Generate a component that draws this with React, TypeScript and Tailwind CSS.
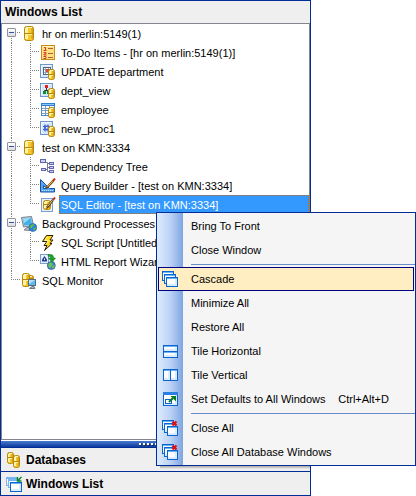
import React, { useState } from 'react';

type IconProps = { children: React.ReactNode };

function Icon({ children }: IconProps) {
  return (
    <svg width="16" height="16" viewBox="0 0 16 16" fill="none" className="block shrink-0" aria-hidden="true">
      {children}
    </svg>
  );
}

// Small yellow cylinder, reused as an overlay on object icons
function Cylinder({ x, y, w, h }: { x: number; y: number; w: number; h: number }) {
  const mid = y + Math.round(h / 2);
  return (
    <g>
      <rect x={x + 0.5} y={y + 0.5} width={w - 1} height={h - 1} rx="2" fill="#f6c92e" stroke="#b8860b" />
      <rect x={x + 1} y={y + 2} width={w > 7 ? 3 : 2} height={h - 4} fill="#fff3a8" />
      <rect x={x + w - 2.6} y={y + 2} width="1.6" height={h - 4} fill="#dda414" />
      <path d={`M${x + 1} ${mid - 0.5}h${w - 2}`} stroke="#b8860b" />
      <path d={`M${x + 1} ${mid + 0.5}h${w - 3}`} stroke="#fff0a0" />
      <path d={`M${x + 2} ${y + 1.5}h${w - 4}`} stroke="#fff6c4" />
    </g>
  );
}

function Page() {
  return (
    <g>
      <rect x="0.5" y="0.5" width="12" height="13" fill="#d6e6fb" stroke="#6f96cc" />
      <path d="M1.5 12V1.5H11" stroke="#f4f9ff" />
    </g>
  );
}

function DatabaseIcon() {
  return (
    <Icon>
      <Cylinder x={3} y={0} w={10} h={15} />
    </Icon>
  );
}

function TodoIcon() {
  return (
    <Icon>
      <rect x="1.5" y="0.5" width="13" height="14" fill="#ffdf80" stroke="#c58c1c" />
      <path d="M2 1.5h12" stroke="#fff4c0" />
      <path d="M4 2.5h1.5v3M3.5 5.5h3M3.5 7.5h2.5v1.5h-2V10h2.5M3.5 11.5h2.5v2h-2.5" stroke="#d0402c" />
      <path d="M8 3.5h5M8 8.5h5M8 12.5h5" stroke="#a8603a" />
    </Icon>
  );
}

function UpdateIcon() {
  return (
    <Icon>
      <Page />
      <rect x="3.5" y="3.5" width="7" height="7" fill="#fff" stroke="#59677d" />
      <path d="M4 5.5h6M4 8.5h6M5.5 4v6M8.5 4v6" stroke="#98a3b3" />
      <rect x="6" y="5" width="3" height="3" fill="#d9483b" />
      <Cylinder x={8} y={5} w={7} h={11} />
    </Icon>
  );
}

function ViewIcon() {
  return (
    <Icon>
      <Page />
      <path d="M6.5 5v3M4.5 9.5V7.5h4v2" stroke="#333" />
      <rect x="5" y="2" width="3" height="3" fill="#e02020" />
      <rect x="3" y="8" width="3" height="3" fill="#0e8f28" />
      <rect x="7" y="8" width="3" height="3" fill="#0e8f28" />
      <Cylinder x={8} y={5} w={7} h={11} />
    </Icon>
  );
}

function TableIcon() {
  return (
    <Icon>
      <rect x="1.5" y="1.5" width="13" height="12" fill="#fff" stroke="#4a86c5" />
      <rect x="1" y="1" width="14" height="3" fill="#2f7fd6" />
      <path d="M2 2.5h12" stroke="#8cc5fa" />
      <path d="M2 6.5h12M2 8.5h12M2 11.5h12M5.5 4v9M9.5 4v9" stroke="#7d9cbd" />
      <Cylinder x={8} y={5} w={7} h={11} />
    </Icon>
  );
}

function ProcIcon() {
  return (
    <Icon>
      <Page />
      <path d="M5 3.5v7M8 3.5v7M3 5.5h7M3 8.5h7" stroke="#3556cf" />
      <rect x="4" y="4.5" width="5" height="5" fill="#4767dc" />
      <rect x="6" y="6" width="1.5" height="1.5" fill="#fff" />
      <Cylinder x={8} y={5} w={7} h={11} />
    </Icon>
  );
}

function DependencyIcon() {
  return (
    <Icon>
      <path d="M5 3.5h2.5v9M7.5 4.5h2M7.5 12.5H10M7.5 8.5H10M5.5 10.5h2" stroke="#777790" />
      <rect x="0.5" y="0.5" width="5" height="3" fill="#cdd0f7" stroke="#6266a8" />
      <rect x="9.5" y="3.5" width="4" height="2" fill="#cdd0f7" stroke="#6266a8" />
      <rect x="1.5" y="9.5" width="4" height="2" fill="#cdd0f7" stroke="#6266a8" />
      <rect x="9.5" y="7.5" width="4" height="2" fill="#cdd0f7" stroke="#6266a8" />
      <rect x="9.5" y="11.5" width="4" height="2" fill="#cdd0f7" stroke="#6266a8" />
    </Icon>
  );
}

function QueryBuilderIcon() {
  return (
    <Icon>
      <path d="M.5 1.5V14h14V10.5H9.5L.5 1.5z" fill="#5ba6ec" stroke="#1552a8" />
      <path d="M3.5 7.5v3H7z" fill="#fff" stroke="#1552a8" />
      <path d="M2 12.5h12" stroke="#c8e4ff" strokeDasharray="1 1" />
      <path d="M6.5 10l7-7.5" stroke="#70420e" strokeWidth="2.2" />
      <path d="M7.5 8.8l5.5-6" stroke="#f8b24a" strokeWidth="1" />
      <path d="M13 2.8l2-2.3" stroke="#d02a1c" strokeWidth="2" />
    </Icon>
  );
}

function SqlEditorIcon() {
  return (
    <Icon>
      <rect x="1.5" y="1.5" width="11" height="13" fill="#e8f1fd" stroke="#7c9fd0" />
      <Cylinder x={3} y={3} w={8} h={10} />
      <path d="M7 10.5l6-7.5" stroke="#4a3a20" strokeWidth="2.2" />
      <path d="M7.5 9.5l5-6" stroke="#fbd668" strokeWidth="1" />
      <path d="M13 3l2-2.5" stroke="#c42a1c" strokeWidth="2" />
      <path d="M6 12l1-2 1 1z" fill="#222" />
    </Icon>
  );
}

function BackgroundIcon() {
  return (
    <Icon>
      <path d="M.5 1.5L10.5.5l2 9-10 1.5z" fill="#c3d0d8" stroke="#73828d" />
      <path d="M2 2.5l7.8-.8 1.2 6.8-8 1z" fill="#43b2ea" />
      <path d="M2 2.5l7.8-.8L3 7z" fill="#9adcf9" />
      <path d="M3 14l3-2.5h3L8.5 14.5z" fill="#b6c0c6" stroke="#7a8893" />
      <circle cx="11.8" cy="11.5" r="3.9" fill="#2f80dc" stroke="#2560a8" strokeWidth=".7" />
      <path d="M9.5 9l3-1 1 1.5-2 1-1 2-2-1zM12.5 12l2.5-.5-1 2.5-1.5.5z" fill="#58c04a" />
    </Icon>
  );
}

function ScriptIcon() {
  return (
    <Icon>
      <path
        d="M6.5 .5h6.500L10 5h3L10 8.5h2L4.5 15.5l2.5-5H4L7 6.5H2.5z"
        fill="#ffd91a"
        stroke="#2b2000"
        strokeWidth="1"
      />
      <path d="M7.5 1.5L5 5.5h3.5L6 9.5" stroke="#fff7a0" />
    </Icon>
  );
}

function HtmlReportIcon() {
  return (
    <Icon>
      <rect x="0.5" y="0.5" width="8" height="9" fill="#e8f1fd" stroke="#7c9fd0" />
      <path d="M2 7.5V5.5L4.5 2 7 5.5v2z" fill="#1c3f96" />
      <rect x="4" y="4.5" width="1" height="1.5" fill="#fff" />
      <circle cx="11.3" cy="11.5" r="4" fill="#3e7fd6" stroke="#26549c" strokeWidth=".7" />
      <path d="M8.5 9.5l2.5-1.5 2 2-1.5 2-1 2.5-2-1.5zM12.5 11.5l2.5-.5-1 3-2 .5z" fill="#6cc453" />
      <path
        d="M8 .5h2.5c2.5 0 3 1.5 3 3.5h2L12 8.5 8.5 4h2c0-1.2-.5-1.7-2.5-1.7z"
        fill="#1ea02e"
        stroke="#0c6d1a"
        strokeWidth=".5"
      />
    </Icon>
  );
}

function MonitorIcon() {
  return (
    <Icon>
      <Cylinder x={6} y={2} w={7} h={8} />
      <Cylinder x={1} y={0} w={8} h={14} />
      <rect x="7.5" y="6.5" width="7" height="6" fill="#5fb9ea" stroke="#5a6d7d" />
      <path d="M8 7h6l-6 4z" fill="#b2e2fa" />
      <path d="M8.5 15.5l2.5-2h2l1 2z" fill="#aab5bd" stroke="#6c7a85" />
    </Icon>
  );
}

function DatabasesIcon() {
  return (
    <Icon>
      <Cylinder x={1} y={0} w={7} h={12} />
      <Cylinder x={7} y={3} w={7} h={13} />
    </Icon>
  );
}

type WinProps = { x: number; y: number; w: number; h: number; border?: string };

function Win({ x, y, w, h, border = '#0f63cf' }: WinProps) {
  return (
    <g shapeRendering="crispEdges">
      <rect x={x + 0.5} y={y + 0.5} width={w - 1} height={h - 1} fill="#d8ebff" stroke={border} />
      <rect x={x + 1} y={y + 2} width={w - 4} height={h - 5} fill="#fff" />
      <path d={`M${x + 1} ${y + 1.5}h${w - 2}`} stroke="#69b4f5" />
    </g>
  );
}

function CascadeIcon() {
  return (
    <Icon>
      <Win x={0} y={0} w={12} h={10} />
      <Win x={2} y={3} w={12} h={10} />
      <Win x={4} y={6} w={12} h={10} />
    </Icon>
  );
}

function CloseAllIcon() {
  return (
    <Icon>
      <Win x={0} y={0} w={12} h={10} />
      <Win x={2} y={3} w={12} h={10} />
      <Win x={5} y={6} w={11} h={10} />
      <path d="M10.5 1.5l4 4M14.5 1.5l-4 4" stroke="#dd1010" strokeWidth="2.2" />
    </Icon>
  );
}

function WindowsListIcon() {
  return (
    <Icon>
      <Win x={0} y={1} w={12} h={9} border="#7db4ec" />
      <Win x={2} y={3} w={12} h={9} border="#7db4ec" />
      <Win x={4} y={6} w={12} h={10} />
      <path d="M11.5 1v4H15.5M12 4.5l3.5-3.5" stroke="#0e8a2c" strokeWidth="1.5" />
    </Icon>
  );
}

function TileHorizontalIcon() {
  return (
    <Icon>
      <Win x={1} y={2} w={15} h={7} />
      <Win x={1} y={8} w={15} h={7} />
    </Icon>
  );
}

function TileVerticalIcon() {
  return (
    <Icon>
      <Win x={1} y={2} w={8} h={12} />
      <Win x={8} y={2} w={8} h={12} />
    </Icon>
  );
}

function DefaultsIcon() {
  return (
    <Icon>
      <Win x={1} y={1} w={15} h={14} />
      <rect x="1" y="1" width="15" height="3" fill="#2a80e0" />
      <rect x="3.5" y="8.5" width="6" height="4" fill="#fff" stroke="#0f63cf" />
      <path d="M7 11l4-4" stroke="#0b7a1e" strokeWidth="2" />
      <path d="M8.5 5H14v5.5z" fill="#0b7a1e" />
    </Icon>
  );
}

type TreeItem = { label: string; icon: React.ReactNode; children?: TreeItem[] };

const tree: TreeItem[] = [
  {
    label: 'hr on merlin:5149(1)',
    icon: <DatabaseIcon />,
    children: [
      { label: 'To-Do Items - [hr on merlin:5149(1)]', icon: <TodoIcon /> },
      { label: 'UPDATE department', icon: <UpdateIcon /> },
      { label: 'dept_view', icon: <ViewIcon /> },
      { label: 'employee', icon: <TableIcon /> },
      { label: 'new_proc1', icon: <ProcIcon /> },
    ],
  },
  {
    label: 'test on KMN:3334',
    icon: <DatabaseIcon />,
    children: [
      { label: 'Dependency Tree', icon: <DependencyIcon /> },
      { label: 'Query Builder - [test on KMN:3334]', icon: <QueryBuilderIcon /> },
      { label: 'SQL Editor - [test on KMN:3334]', icon: <SqlEditorIcon /> },
    ],
  },
  {
    label: 'Background Processes',
    icon: <BackgroundIcon />,
    children: [
      { label: 'SQL Script [Untitled]', icon: <ScriptIcon /> },
      { label: 'HTML Report Wizard', icon: <HtmlReportIcon /> },
    ],
  },
  { label: 'SQL Monitor', icon: <MonitorIcon /> },
];

type MenuEntry = { label: string; icon?: React.ReactNode; shortcut?: string };

const menuGroups: MenuEntry[][] = [
  [{ label: 'Bring To Front' }, { label: 'Close Window' }],
  [
    { label: 'Cascade', icon: <CascadeIcon /> },
    { label: 'Minimize All' },
    { label: 'Restore All' },
    { label: 'Tile Horizontal', icon: <TileHorizontalIcon /> },
    { label: 'Tile Vertical', icon: <TileVerticalIcon /> },
    { label: 'Set Defaults to All Windows', icon: <DefaultsIcon />, shortcut: 'Ctrl+Alt+D' },
  ],
  [
    { label: 'Close All', icon: <CloseAllIcon /> },
    { label: 'Close All Database Windows', icon: <CloseAllIcon /> },
  ],
];

// Dotted connector lines of the tree, one cell per indent level
function Connector({ up, down, right }: { up?: boolean; down?: boolean; right?: boolean }) {
  return (
    <svg width="19" height="19" viewBox="0 0 19 19" className="block shrink-0" shapeRendering="crispEdges" aria-hidden="true">
      <g stroke="#808080" strokeDasharray="1 1">
        {up && <path d="M9.5 0v9" />}
        {down && <path d="M9.5 8v11" />}
        {right && <path d="M9 8.5h10" />}
      </g>
    </svg>
  );
}

type RowProps = {
  item: TreeItem;
  selected: string;
  onSelect: (label: string) => void;
  children: React.ReactNode;
};

function TreeRow({ item, selected, onSelect, children }: RowProps) {
  const active = item.label === selected;
  return (
    <div className="flex h-[19px] items-center">
      {children}
      <span className="w-[19px] shrink-0">{item.icon}</span>
      <button
        type="button"
        onClick={() => onSelect(item.label)}
        className={
          active
            ? 'h-[19px] min-w-0 flex-1 overflow-hidden border border-dotted border-[#cc6600] bg-[#3399ff] pt-px pl-px text-left leading-4 whitespace-nowrap text-white'
            : 'h-[19px] min-w-0 flex-1 overflow-hidden border border-transparent pt-px pl-px text-left leading-4 whitespace-nowrap'
        }
      >
        {item.label}
      </button>
    </div>
  );
}

function WindowTree() {
  const [selected, setSelected] = useState('SQL Editor - [test on KMN:3334]');
  const [closed, setClosed] = useState<string[]>([]);

  const toggle = (label: string) =>
    setClosed(closed.includes(label) ? closed.filter((l) => l !== label) : [...closed, label]);

  return (
    <ul className="flex-1 border border-[#84848c] bg-white">
      {tree.map((root, i) => {
        const last = i === tree.length - 1;
        const open = !closed.includes(root.label);
        return (
          <li key={root.label}>
            <TreeRow item={root} selected={selected} onSelect={setSelected}>
              <span className="relative">
                <Connector up={i > 0} down={!last} right />
                {root.children && (
                  <button
                    type="button"
                    aria-label={open ? 'Collapse' : 'Expand'}
                    onClick={() => toggle(root.label)}
                    className="absolute top-1 left-[5px] flex size-[9px] items-center justify-center rounded-[1px] border border-[#8c939c] bg-gradient-to-b from-white to-[#dcdcdc]"
                  >
                    <span className="h-px w-[5px] bg-[#2f4fa8]" />
                    {!open && <span className="absolute h-[5px] w-px bg-[#2f4fa8]" />}
                  </button>
                )}
              </span>
            </TreeRow>
            {root.children && open && (
              <ul>
                {root.children.map((child, j) => (
                  <li key={child.label}>
                    <TreeRow item={child} selected={selected} onSelect={setSelected}>
                      <Connector up={!last} down={!last} />
                      <Connector up down={j < root.children!.length - 1} right />
                    </TreeRow>
                  </li>
                ))}
              </ul>
            )}
          </li>
        );
      })}
    </ul>
  );
}

function ContextMenu() {
  const [current, setCurrent] = useState('Cascade');
  return (
    <div className="absolute top-[212px] left-[156px] w-max min-w-[260px]">
      <div
        role="menu"
        className="border border-[#002d96] bg-[#f5f5f5] bg-[linear-gradient(to_right,#ddecfe,#bdd3f5_50%,#7ea5e2)] bg-[length:26px_100%] bg-no-repeat py-px"
      >
        {menuGroups.map((group, i) => (
          <div key={i}>
            {i > 0 && <div role="separator" className="my-[2px] ml-[34px] h-px bg-[#6a8ccb]" />}
            {group.map((entry) => (
              <button
                key={entry.label}
                type="button"
                role="menuitem"
                onMouseEnter={() => setCurrent(entry.label)}
                className={
                  entry.label === current
                    ? 'mx-px flex h-6 w-[calc(100%-2px)] items-center border border-[#000080] bg-[#ffeec2] pr-6 pl-[3px] text-left'
                    : 'mx-px flex h-6 w-[calc(100%-2px)] items-center border border-transparent pr-6 pl-[3px] text-left'
                }
              >
                <span className="w-[29px] shrink-0">{entry.icon}</span>
                <span className="flex-1 whitespace-nowrap">{entry.label}</span>
                {entry.shortcut && <span className="pl-3 whitespace-nowrap">{entry.shortcut}</span>}
              </button>
            ))}
          </div>
        ))}
      </div>
      <div className="absolute top-full left-1 h-[3px] w-[150px] bg-gradient-to-b from-[#a8a8a8] to-[#efefef]" />
    </div>
  );
}

function NavButton({ icon, children }: { icon: React.ReactNode; children: React.ReactNode }) {
  return (
    <button
      type="button"
      className="flex h-6 w-full items-center gap-1 border-t border-[#002d96] bg-[#efefef] pl-[5px] text-left text-xs font-bold"
    >
      {icon}
      {children}
    </button>
  );
}

export default function App() {
  return (
    <div className="relative min-h-screen bg-white font-['Liberation_Sans',Arial,sans-serif] text-[11px] text-black">
      <div className="mr-[105px] flex min-h-screen flex-col border border-[#002d96]">
        <h1 className="flex h-[22px] items-center bg-[#efefef] pl-1 text-xs font-bold">Windows List</h1>
        <WindowTree />
        <div className="mt-px flex h-[6px] items-center justify-center gap-[2px] bg-gradient-to-b from-[#4a7ace] to-[#0a3a9c]">
          {Array.from({ length: 9 }, (_, i) => (
            <span key={i} className="size-[2px] bg-white shadow-[1px_1px_0_#1c2c50]" />
          ))}
        </div>
        <NavButton icon={<DatabasesIcon />}>Databases</NavButton>
        <NavButton icon={<WindowsListIcon />}>Windows List</NavButton>
      </div>
      <ContextMenu />
    </div>
  );
}
